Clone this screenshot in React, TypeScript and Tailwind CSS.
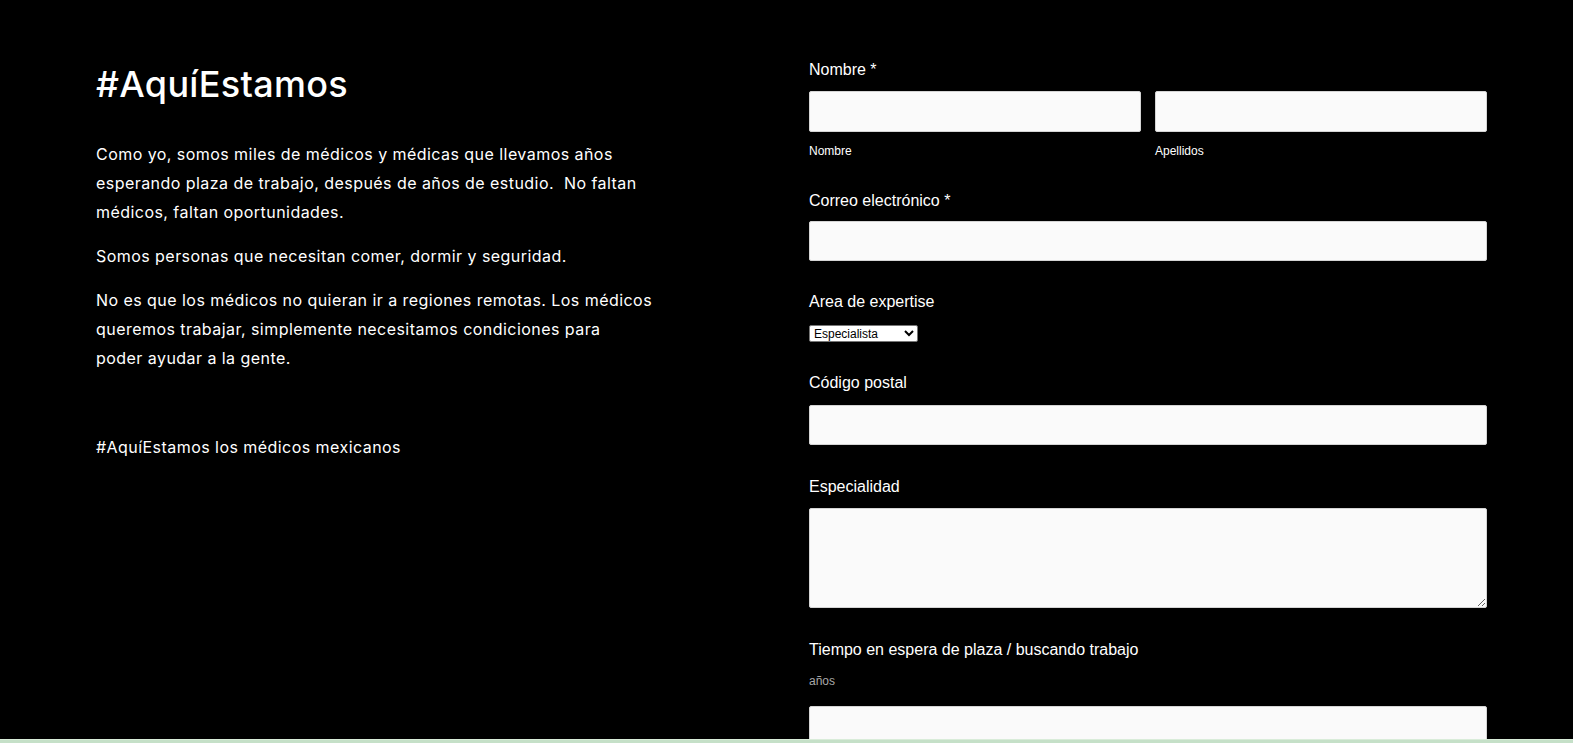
import React from 'react';

const inputCls =
  'block w-full bg-[#fafafa] border border-[#d4d4d4] rounded-[2px] outline-none';

const Label: React.FC<{ text: string; required?: boolean; className?: string }> = ({ text, required, className }) => (
  <div className={`text-[16px] leading-[18px] text-white ${className ?? ''}`}>
    {text}
    {required && <span> *</span>}
  </div>
);

const App: React.FC = () => {
  return (
    <div className="flex h-screen flex-col overflow-hidden bg-black">
      <div className="flex flex-1 overflow-hidden">
        {/* left copy */}
        <div className="w-[809px] shrink-0 pl-[96px] pt-[62px] text-white font-['Inter',sans-serif]">
          <h1 className="text-[36px] leading-[44px] font-medium tracking-[0.3px]">#AquíEstamos</h1>
          <div className="mt-[34px] text-[16px] leading-[29px] tracking-[0.45px]">
            <p className="mb-[15px]">
              <span className="block whitespace-nowrap">Como yo, somos miles de médicos y médicas que llevamos años</span>
              <span className="block whitespace-pre">esperando plaza de trabajo, después de años de estudio.  No faltan</span>
              <span className="block whitespace-nowrap">médicos, faltan oportunidades.</span>
            </p>
            <p className="mb-[15px]">Somos personas que necesitan comer, dormir y seguridad.</p>
            <p>
              <span className="block whitespace-nowrap">No es que los médicos no quieran ir a regiones remotas. Los médicos</span>
              <span className="block whitespace-nowrap">queremos trabajar, simplemente necesitamos condiciones para</span>
              <span className="block whitespace-nowrap">poder ayudar a la gente.</span>
            </p>
            <p className="mt-[60px]">#AquíEstamos los médicos mexicanos</p>
          </div>
        </div>

        {/* form */}
        <form className="w-[678px] shrink-0 pt-[61px] font-['Liberation_Sans',Arial,sans-serif]">
          <Label text="Nombre" required />
          <div className="mt-[12px] flex gap-[14px]">
            <div className="flex-1">
              <input className={`${inputCls} h-[41px]`} />
              <div className="mt-[12px] text-[12px] leading-[14px] text-white">Nombre</div>
            </div>
            <div className="flex-1">
              <input className={`${inputCls} h-[41px]`} />
              <div className="mt-[12px] text-[12px] leading-[14px] text-white">Apellidos</div>
            </div>
          </div>

          <Label text="Correo electrónico" required className="mt-[34px]" />
          <input className={`${inputCls} mt-[11px] h-[40px]`} />

          <Label text="Area de expertise" className="mt-[32px]" />
          <select
            defaultValue="Especialista"
            className="mt-[14px] block h-[17px] w-[109px] bg-white text-[12px] leading-[14px] text-black border border-[#767676] rounded-[2px]"
          >
            <option>Especialista</option>
            <option>Médico general</option>
          </select>

          <Label text="Código postal" className="mt-[32px]" />
          <input className={`${inputCls} mt-[13px] h-[40px]`} />

          <Label text="Especialidad" className="mt-[33px]" />
          <textarea className={`${inputCls} mt-[12px] h-[100px] resize-y`} />

          <Label text="Tiempo en espera de plaza / buscando trabajo" className="mt-[33px]" />
          <div className="mt-[15px] text-[12px] leading-[14px] text-[#a8a8a8]">años</div>
          <input className={`${inputCls} mt-[18px] h-[40px]`} />
        </form>
      </div>
      <div className="h-[4px] shrink-0 border-t border-[#d9ecd9] bg-[#c5e0c8]" />
    </div>
  );
};

export default App;
